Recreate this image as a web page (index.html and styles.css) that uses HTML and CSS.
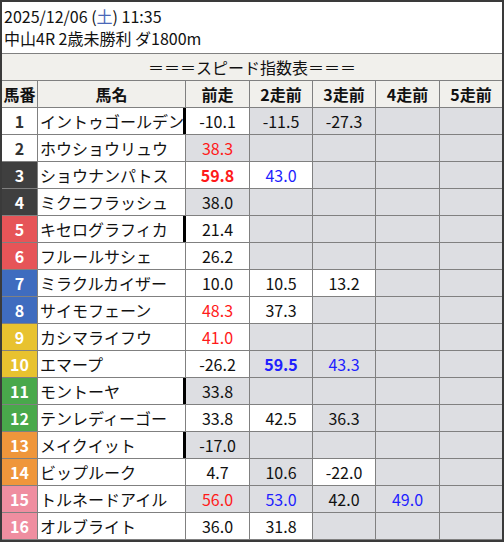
FILE: index.html
```html
<!DOCTYPE html>
<html lang="ja">
<head>
<meta charset="utf-8">
<title>スピード指数表</title>
<link rel="stylesheet" href="styles.css">
</head>
<body>
<div class="frame">
  <div class="info">
    <div class="line">2025/12/06 (<span class="sat">土</span>) 11:35</div>
    <div class="line">中山4R 2歳未勝利 ダ1800m</div>
  </div>
  <div class="sheet">
    <div class="title">＝＝＝スピード指数表＝＝＝</div>
    <div class="hd">馬番</div><div class="hd">馬名</div><div class="hd">前走</div><div class="hd">2走前</div><div class="hd">3走前</div><div class="hd">4走前</div><div class="hd">5走前</div>

    <div class="no w1">1</div><div class="name">イントゥゴールデン</div><div class="v rest">-10.1</div><div class="v g">-11.5</div><div class="v g">-27.3</div><div class="v g"></div><div class="v g"></div>
    <div class="no w1">2</div><div class="name">ホウショウリュウ</div><div class="v g red">38.3</div><div class="v g"></div><div class="v g"></div><div class="v g"></div><div class="v g"></div>
    <div class="no w2">3</div><div class="name">ショウナンパトス</div><div class="v red b">59.8</div><div class="v blue">43.0</div><div class="v g"></div><div class="v g"></div><div class="v g"></div>
    <div class="no w2">4</div><div class="name">ミクニフラッシュ</div><div class="v g">38.0</div><div class="v g"></div><div class="v g"></div><div class="v g"></div><div class="v g"></div>
    <div class="no w3">5</div><div class="name">キセログラフィカ</div><div class="v rest">21.4</div><div class="v g"></div><div class="v g"></div><div class="v g"></div><div class="v g"></div>
    <div class="no w3">6</div><div class="name">フルールサシェ</div><div class="v">26.2</div><div class="v g"></div><div class="v g"></div><div class="v g"></div><div class="v g"></div>
    <div class="no w4">7</div><div class="name">ミラクルカイザー</div><div class="v">10.0</div><div class="v">10.5</div><div class="v">13.2</div><div class="v g"></div><div class="v g"></div>
    <div class="no w4">8</div><div class="name">サイモフェーン</div><div class="v red">48.3</div><div class="v">37.3</div><div class="v g"></div><div class="v g"></div><div class="v g"></div>
    <div class="no w5">9</div><div class="name">カシマライフウ</div><div class="v red">41.0</div><div class="v g"></div><div class="v g"></div><div class="v g"></div><div class="v g"></div>
    <div class="no w5">10</div><div class="name">エマープ</div><div class="v">-26.2</div><div class="v g blue b">59.5</div><div class="v g blue">43.3</div><div class="v g"></div><div class="v g"></div>
    <div class="no w6">11</div><div class="name">モントーヤ</div><div class="v g rest">33.8</div><div class="v g"></div><div class="v g"></div><div class="v g"></div><div class="v g"></div>
    <div class="no w6">12</div><div class="name">テンレディーゴー</div><div class="v">33.8</div><div class="v">42.5</div><div class="v g">36.3</div><div class="v g"></div><div class="v g"></div>
    <div class="no w7">13</div><div class="name">メイクイット</div><div class="v g rest">-17.0</div><div class="v g"></div><div class="v g"></div><div class="v g"></div><div class="v g"></div>
    <div class="no w7">14</div><div class="name">ビップルーク</div><div class="v">4.7</div><div class="v g">10.6</div><div class="v">-22.0</div><div class="v g"></div><div class="v g"></div>
    <div class="no w8">15</div><div class="name">トルネードアイル</div><div class="v g red">56.0</div><div class="v g blue">53.0</div><div class="v g">42.0</div><div class="v g blue">49.0</div><div class="v g"></div>
    <div class="no w8">16</div><div class="name">オルブライト</div><div class="v">36.0</div><div class="v">31.8</div><div class="v g"></div><div class="v g"></div><div class="v g"></div>
  </div>
</div>
</body>
</html>
```

FILE: styles.css
```css
html, body {
  margin: 0;
  padding: 0;
  background: #fff;
}

body {
  font-family: "Noto Sans CJK JP", "Noto Sans", sans-serif;
  font-size: 16px;
  color: #111;
}

.frame {
  width: 500px;
  border: 2px solid #3a3a3a;
  background: #fff;
}

.info {
  padding: 3px 2px 4px 2px;
  height: 44px;
}

.line {
  line-height: 22px;
  height: 22px;
  white-space: nowrap;
}

.sat {
  color: #4a68b8;
}

.sheet {
  display: grid;
  grid-template-columns: 35px 147px 63px 62px 62px 63px 62px;
  grid-auto-rows: 26px;
  gap: 1px;
  background: #808080;
  border-top: 1px solid #808080;
  padding-bottom: 1px;
}

.sheet > div {
  display: flex;
  align-items: center;
  white-space: nowrap;
  overflow: visible;
  background: #fff;
}

.sheet > .title {
  grid-column: 1 / -1;
  justify-content: center;
  background: #f1f0ec;
}

.sheet > .hd {
  justify-content: center;
  font-weight: bold;
  background: #f1f0ec;
}

.sheet > .no {
  justify-content: center;
  font-weight: bold;
  color: #fff;
}

.sheet > .w1 { background: #fff; color: #333; }
.sheet > .w2 { background: #3f3f3f; }
.sheet > .w3 { background: #e65558; }
.sheet > .w4 { background: #3f6cbf; }
.sheet > .w5 { background: #e8c22f; }
.sheet > .w6 { background: #49a84b; }
.sheet > .w7 { background: #ef963b; }
.sheet > .w8 { background: #ef8ea0; }

.sheet > .name {
  padding-left: 2px;
}

.sheet > .v {
  justify-content: center;
}

.sheet > .g {
  background: #dddee2;
}

.sheet > .red { color: #ff1a1a; }
.sheet > .blue { color: #1f1fff; }
.sheet > .b { font-weight: bold; }

.sheet > .rest {
  position: relative;
}

.sheet > .rest::before {
  content: "";
  position: absolute;
  left: -3px;
  top: 0;
  bottom: 0;
  width: 3px;
  background: #000;
}
```
